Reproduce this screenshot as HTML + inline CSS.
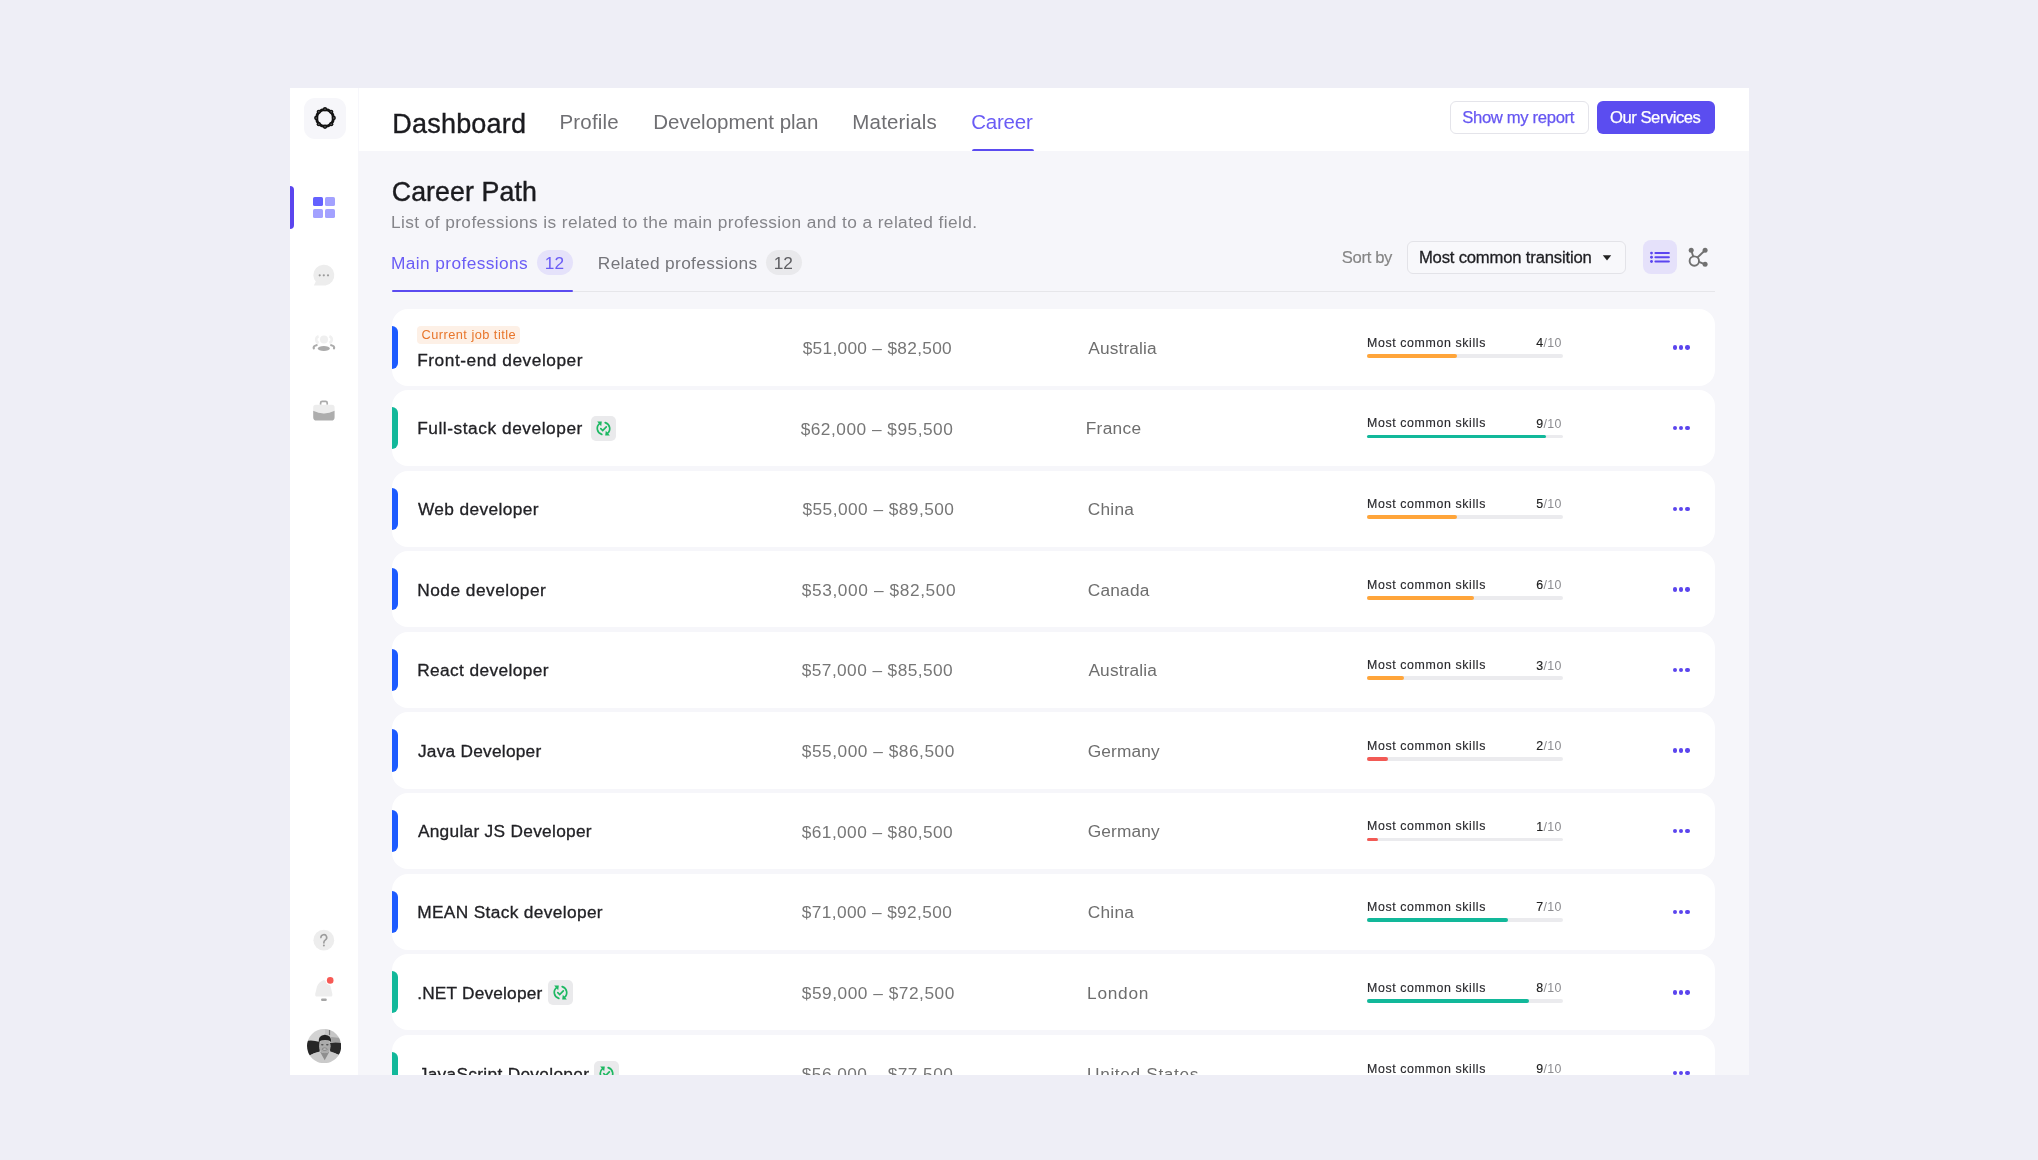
<!DOCTYPE html><html><head><meta charset="utf-8"><title>Career Path</title><style>
*{margin:0;padding:0;box-sizing:content-box}
html,body{width:2038px;height:1160px;overflow:hidden;background:#EEEEF6;font-family:"Liberation Sans",sans-serif;}
.abs{position:absolute}
.layer{position:absolute;left:0;top:0;width:2038px;height:1160px;will-change:transform}
.t{position:absolute;white-space:nowrap}
.frame{position:absolute;left:290px;top:88px;width:1459px;height:987px;background:#F6F6FA}
.sidebar{position:absolute;left:290px;top:88px;width:68px;height:987px;background:#FFFFFF}
.header{position:absolute;left:358px;top:88px;width:1391px;height:63px;background:#FFFFFF}
.content{position:absolute;left:358px;top:151px;width:1391px;height:924px;background:#F6F6FA}
.rowclip{position:absolute;left:0;top:0;width:2038px;height:1075px;overflow:hidden}
.card{position:absolute;left:391.6px;width:1323.5px;height:76.4px;border-radius:16px;background:#FFFFFF}
.avatar{border-radius:50%;background:radial-gradient(circle at 50% 40%, #5a5a5a 0 22%, #d8d8d8 23% 30%, #3a3a3a 31% 45%, #cfcfcf 46% 100%);overflow:hidden}
</style></head><body><div class="layer"><div class="frame"></div>
<div class="sidebar"></div>
<div class="header"></div>
<div class="content"></div>
<div class="abs" style="left:357.6px;top:88px;width:1px;height:63px;background:#F7F7FB;"></div>
<div class="abs" style="left:304px;top:98px;width:42px;height:41px;border-radius:11px;background:#F6F6FA;"></div>
<svg class="abs" style="left:310.8px;top:104.4px" width="28" height="28" viewBox="0 0 28 28"><circle cx="14" cy="14" r="8.45" fill="none" stroke="#121212" stroke-width="2.9"/><circle cx="22.75" cy="14.00" r="2.15" fill="#121212"/><circle cx="20.19" cy="20.19" r="2.15" fill="#121212"/><circle cx="14.00" cy="22.75" r="2.15" fill="#121212"/><circle cx="7.81" cy="20.19" r="2.15" fill="#121212"/><circle cx="5.25" cy="14.00" r="2.15" fill="#121212"/><circle cx="7.81" cy="7.81" r="2.15" fill="#121212"/><circle cx="14.00" cy="5.25" r="2.15" fill="#121212"/><circle cx="20.19" cy="7.81" r="2.15" fill="#121212"/><circle cx="22.75" cy="14.00" r="0.75" fill="#6a6a6a"/><circle cx="20.19" cy="20.19" r="0.75" fill="#6a6a6a"/><circle cx="14.00" cy="22.75" r="0.75" fill="#6a6a6a"/><circle cx="7.81" cy="20.19" r="0.75" fill="#6a6a6a"/><circle cx="5.25" cy="14.00" r="0.75" fill="#6a6a6a"/><circle cx="7.81" cy="7.81" r="0.75" fill="#6a6a6a"/><circle cx="14.00" cy="5.25" r="0.75" fill="#6a6a6a"/><circle cx="20.19" cy="7.81" r="0.75" fill="#6a6a6a"/></svg>
<div class="abs" style="left:290px;top:186.2px;width:4.2px;height:42.7px;border-radius:0 4px 4px 0;background:#5B45EE;"></div>
<div class="abs" style="left:313.2px;top:196.8px;width:9.5px;height:9.3px;border-radius:1.6px;background:#6461FF;"></div>
<div class="abs" style="left:325px;top:196.8px;width:9.5px;height:9.3px;border-radius:1.6px;background:#A3A1FF;"></div>
<div class="abs" style="left:313.2px;top:208.6px;width:9.5px;height:9.3px;border-radius:1.6px;background:#A3A1FF;"></div>
<div class="abs" style="left:325px;top:208.6px;width:9.5px;height:9.3px;border-radius:1.6px;background:#A3A1FF;"></div>
<svg class="abs" style="left:304px;top:255px" width="40" height="40" viewBox="0 0 40 40"><path d="M9.3 20.2 A10.5 10.5 0 1 1 21.6 30.5 L9.8 30.6 L11.8 26.6 A10.5 10.5 0 0 1 9.3 20.2Z" fill="#EDEDED"/><circle cx="15.7" cy="20.3" r="1.1" fill="#9A9A9A"/><circle cx="19.8" cy="20.3" r="1.1" fill="#9A9A9A"/><circle cx="24" cy="20.3" r="1.1" fill="#9A9A9A"/></svg>
<svg class="abs" style="left:304px;top:325px" width="40" height="40" viewBox="0 0 40 40"><circle cx="20" cy="14.6" r="4" fill="#EFEFEF"/><path d="M14.6 11.2 a3.6 3.6 0 0 0 0 6.8" fill="none" stroke="#F0F0F0" stroke-width="2.6"/><path d="M25.4 11.2 a3.6 3.6 0 0 1 0 6.8" fill="none" stroke="#F0F0F0" stroke-width="2.6"/><ellipse cx="19.8" cy="23.5" rx="6" ry="2.4" fill="#ABABAB"/><path d="M12.6 20.2 Q9 21 9.8 23.4" fill="none" stroke="#ABABAB" stroke-width="2.2" stroke-linecap="round"/><path d="M27.2 20.2 Q30.8 21 30 23.4" fill="none" stroke="#ABABAB" stroke-width="2.2" stroke-linecap="round"/></svg>
<svg class="abs" style="left:304px;top:392px" width="40" height="40" viewBox="0 0 40 40"><path d="M16.6 12.8 v-1.8 a1.6 1.6 0 0 1 1.6 -1.6 h3.4 a1.6 1.6 0 0 1 1.6 1.6 v1.8" fill="none" stroke="#ABABAB" stroke-width="1.7"/><path d="M9.2 15.4 a2.6 2.6 0 0 1 2.6 -2.6 h16.2 a2.6 2.6 0 0 1 2.6 2.6 v3.4 q-5.5 2.6 -10.7 2.6 q-5.2 0 -10.7 -2.6z" fill="#EDEDED"/><path d="M9.2 18.8 q5.5 2.6 10.7 2.6 q5.2 0 10.7 -2.6 v6.4 a3.4 3.4 0 0 1 -3.4 3.4 h-14.6 a3.4 3.4 0 0 1 -3.4 -3.4z" fill="#ADADAD"/></svg>
<svg class="abs" style="left:304px;top:920px" width="40" height="40" viewBox="0 0 40 40"><circle cx="19.8" cy="20.2" r="10.4" fill="#EDEDED"/><path d="M16.9 17.6 a2.9 2.9 0 1 1 4.3 2.5 q-1.3 0.8 -1.3 2.2 v0.6" fill="none" stroke="#9C9C9C" stroke-width="1.6" stroke-linecap="round"/><circle cx="19.9" cy="25.6" r="1" fill="#9C9C9C"/></svg>
<svg class="abs" style="left:304px;top:970px" width="40" height="40" viewBox="0 0 40 40"><path d="M19.8 10 C22.5 11 25.6 13.5 26.6 16.5 L28.2 23.2 Q29 26.6 26.6 26.6 H13 Q10.6 26.6 11.4 23.2 L13 16.5 C14 13.5 17.1 11 19.8 10Z" fill="#EDEDED"/><rect x="17" y="28.6" width="5.8" height="2.4" rx="1.2" fill="#A5A5A5"/><circle cx="26.2" cy="10.4" r="4.6" fill="#FFFFFF"/><circle cx="26.2" cy="10.4" r="3.3" fill="#F75A55"/></svg>
<svg class="abs" style="left:306.8px;top:1029px" width="34.2" height="34.2" viewBox="0 0 34 34"><defs><clipPath id="avc"><circle cx="17" cy="17" r="17"/></clipPath><filter id="avb"><feGaussianBlur stdDeviation="0.35"/></filter></defs><g clip-path="url(#avc)"><g filter="url(#avb)"><rect x="-2" y="-2" width="38" height="38" fill="#C6C6C6"/><rect x="-2" y="-2" width="20" height="14" fill="#D3D3D3"/><path d="M21.8 0 L23 0 L23 6 L21.8 6Z" fill="#777"/><path d="M24 8 L33 9 L33 14 L24 13Z" fill="#A0A0A0"/><path d="M-2 12 Q6 10.5 12.4 13 L12.6 22.4 Q6 24 1 27 L-2 27Z" fill="#282828"/><path d="M22.6 14 Q28 12.6 36 14.2 L36 27 Q29 25 23 22.2Z" fill="#2C2C2C"/><path d="M-2 36 L2 26.5 Q8 23 13 22.6 L17.6 29 L22.2 22.6 Q28 23.2 32 26 L36 36Z" fill="#CACACA"/><path d="M13 22.6 L17.6 31 L22.2 22.6 Q17.6 25 13 22.6Z" fill="#8E8E8E"/><ellipse cx="17.8" cy="17.2" rx="5.7" ry="6.8" fill="#ABABAB"/><path d="M11.6 13.8 Q10.8 6.2 17.8 5.8 Q24.6 6.2 24 13.4 Q23 10.6 17.8 10.9 Q12.8 10.8 11.6 13.8Z" fill="#242424"/><ellipse cx="15.2" cy="15.6" rx="1.3" ry="0.7" fill="#505050"/><ellipse cx="20.2" cy="15.6" rx="1.3" ry="0.7" fill="#505050"/><ellipse cx="17.6" cy="20" rx="2.6" ry="1" fill="#D8D8D8" stroke="#5a5a5a" stroke-width="0.6"/></g></g></svg>
<div class="t" style="left:392.34px;top:111.45px;font-size:27.05px;line-height:27.05px;color:#1B1B1F;letter-spacing:0.172px;-webkit-text-stroke:0.35px #1B1B1F;">Dashboard</div>
<div class="t" style="left:559.50px;top:112.24px;font-size:20.51px;line-height:20.51px;color:#6F6F73;letter-spacing:0.162px;">Profile</div>
<div class="t" style="left:653.27px;top:112.24px;font-size:20.51px;line-height:20.51px;color:#6F6F73;letter-spacing:-0.010px;">Development plan</div>
<div class="t" style="left:852.35px;top:112.24px;font-size:20.51px;line-height:20.51px;color:#6F6F73;letter-spacing:0.159px;">Materials</div>
<div class="t" style="left:971.20px;top:112.24px;font-size:20.51px;line-height:20.51px;color:#6A5CF5;letter-spacing:-0.215px;">Career</div>
<div class="abs" style="left:971.7px;top:148.6px;width:62.3px;height:2.6px;border-radius:2px 2px 0 0;background:#5B4BF0;"></div>
<div class="abs" style="left:1450px;top:100.6px;width:139px;height:33.4px;box-sizing:border-box;border:1px solid #E4E4EA;border-radius:6px;background:#fff;"></div>
<div class="t" style="left:1462.28px;top:109.76px;font-size:16.65px;line-height:16.65px;color:#6657F2;letter-spacing:-0.337px;-webkit-text-stroke:0.25px #6657F2;">Show my report</div>
<div class="abs" style="left:1597.2px;top:100.6px;width:117.8px;height:33.6px;border-radius:6px;background:#5B4DF0;"></div>
<div class="t" style="left:1610.05px;top:109.76px;font-size:16.65px;line-height:16.65px;color:#FFFFFF;letter-spacing:-0.480px;-webkit-text-stroke:0.25px #fff;">Our Services</div>
<div class="t" style="left:391.74px;top:179.19px;font-size:26.76px;line-height:26.76px;color:#1B1B1F;letter-spacing:0.085px;-webkit-text-stroke:0.4px #1B1B1F;">Career Path</div>
<div class="t" style="left:391.04px;top:213.71px;font-size:17.30px;line-height:17.30px;color:#85858A;letter-spacing:0.406px;">List of professions is related to the main profession and to a related field.</div>
<div class="t" style="left:391.04px;top:255.21px;font-size:17.30px;line-height:17.30px;color:#6A5CF5;letter-spacing:0.402px;">Main professions</div>
<div class="abs" style="left:537.3px;top:250.1px;width:35.5px;height:25.1px;border-radius:13px;background:#E5E2FA;"></div>
<div class="t" style="left:544.81px;top:254.83px;font-size:17.30px;line-height:17.30px;color:#6A5CF5;">12</div>
<div class="t" style="left:597.81px;top:255.21px;font-size:17.30px;line-height:17.30px;color:#75757A;letter-spacing:0.362px;">Related professions</div>
<div class="abs" style="left:765.8px;top:250.1px;width:35.9px;height:25.1px;border-radius:13px;background:#E9E9EC;"></div>
<div class="t" style="left:773.66px;top:254.83px;font-size:17.30px;line-height:17.30px;color:#5E5E62;">12</div>
<div class="abs" style="left:392px;top:290.8px;width:1323px;height:1.2px;background:#E6E6EA;"></div>
<div class="abs" style="left:391.75px;top:289.5px;width:181.5px;height:2.6px;border-radius:2px;background:#5B4BF0;"></div>
<div class="t" style="left:1341.82px;top:249.76px;font-size:16.65px;line-height:16.65px;color:#858585;letter-spacing:-0.355px;-webkit-text-stroke:0.15px #858585;">Sort by</div>
<div class="abs" style="left:1406.5px;top:240.8px;width:219px;height:32.8px;box-sizing:border-box;border:1px solid #E3E3E8;border-radius:6px;background:#F8F8FB;"></div>
<div class="t" style="left:1418.89px;top:249.76px;font-size:16.65px;line-height:16.65px;color:#1F1F23;letter-spacing:-0.180px;-webkit-text-stroke:0.3px #1F1F23;">Most common transition</div>
<svg class="abs" style="left:1602px;top:254px" width="10" height="8" viewBox="0 0 10 8"><path d="M0.8 1.2 L9.2 1.2 L5 6.4Z" fill="#222"/></svg>
<div class="abs" style="left:1643px;top:240.2px;width:33.8px;height:33.8px;border-radius:8px;background:#E5E1FA;"></div>
<svg class="abs" style="left:1643px;top:240px" width="34" height="34" viewBox="0 0 34 34"><g fill="#5B45F0"><circle cx="8.5" cy="13.1" r="1.45"/><circle cx="8.5" cy="17.2" r="1.45"/><circle cx="8.5" cy="21.5" r="1.45"/></g><g stroke="#5B45F0" stroke-width="2" stroke-linecap="round"><line x1="12.4" y1="13.1" x2="25.9" y2="13.1"/><line x1="12.4" y1="17.2" x2="25.9" y2="17.2"/><line x1="12.4" y1="21.5" x2="25.9" y2="21.5"/></g></svg>
<svg class="abs" style="left:1684px;top:244px" width="26" height="26" viewBox="0 0 26 26"><g stroke="#717171" stroke-width="1.9" fill="none"><circle cx="10.3" cy="17.1" r="4.7"/><line x1="9.2" y1="12.4" x2="7.2" y2="6.3"/><line x1="13.4" y1="13.5" x2="21.1" y2="6.3"/><line x1="15" y1="17.8" x2="21.1" y2="20.3"/></g><g fill="#717171"><circle cx="7.2" cy="6.3" r="2.5"/><circle cx="21.1" cy="6.3" r="2.5"/><circle cx="21.1" cy="20.3" r="2.5"/></g></svg>
<div class="rowclip"><div class="card" style="top:309.30px;"></div><div class="abs" style="left:391.6px;top:326.40px;width:6.7px;height:42.2px;border-radius:0 6px 6px 0;background:#1D5BFF;"></div><div class="abs" style="left:417px;top:325.50px;width:103px;height:18.6px;border-radius:4px;background:#FDF0E6;"></div><div class="t" style="left:421.51px;top:328.51px;font-size:12.80px;line-height:12.80px;color:#E8752A;letter-spacing:0.459px;">Current job title</div><div class="t" style="left:417.20px;top:351.96px;font-size:17.30px;line-height:17.30px;color:#222226;letter-spacing:0.539px;-webkit-text-stroke:0.3px #222226;">Front-end developer</div><div class="t" style="left:802.67px;top:340.21px;font-size:17.30px;line-height:17.30px;color:#767676;letter-spacing:0.306px;">$51,000 – $82,500</div><div class="t" style="left:1088.28px;top:340.33px;font-size:17.30px;line-height:17.30px;color:#6E6E6E;letter-spacing:0.138px;">Australia</div><div class="t" style="left:1366.97px;top:336.63px;font-size:12.36px;line-height:12.36px;color:#2A2A2E;letter-spacing:0.621px;-webkit-text-stroke:0.15px #2A2A2E;">Most common skills</div><div class="t" style="left:1520px;width:41.6px;text-align:right;top:337.23px;font-size:12.36px;line-height:12.36px;color:#8C8C90;letter-spacing:0.3px;"><span style="color:#222;-webkit-text-stroke:0.15px #222;">4</span>/10</div><div class="abs" style="left:1367.2px;top:354.00px;width:195.8px;height:3.9px;border-radius:2px;background:#EBEBEE;"></div><div class="abs" style="left:1367.2px;top:354.00px;width:89.80px;height:3.9px;border-radius:2px;background:#FFA53A;"></div><div class="abs" style="left:1672.50px;top:345.45px;width:4.3px;height:4.3px;border-radius:50%;background:#5B45EE;"></div><div class="abs" style="left:1678.85px;top:345.45px;width:4.3px;height:4.3px;border-radius:50%;background:#5B45EE;"></div><div class="abs" style="left:1685.35px;top:345.45px;width:4.3px;height:4.3px;border-radius:50%;background:#5B45EE;"></div><div class="card" style="top:389.90px;"></div><div class="abs" style="left:391.6px;top:407.00px;width:6.7px;height:42.2px;border-radius:0 6px 6px 0;background:#12B89A;"></div><div class="t" style="left:417.20px;top:420.21px;font-size:17.30px;line-height:17.30px;color:#222226;letter-spacing:0.551px;-webkit-text-stroke:0.3px #222226;">Full-stack developer</div><div class="abs" style="left:591.20px;top:415.70px;width:25px;height:25.2px;border-radius:5px;background:#EAEAEC;"></div><svg class="abs" style="left:591.20px;top:415.70px" width="25" height="25" viewBox="0 0 25 25"><g fill="none" stroke="#1DB862" stroke-width="1.7" stroke-linecap="round"><path d="M10.8 18.4 A6.2 6.2 0 0 1 8.6 7.6"/><path d="M14.2 6.6 A6.2 6.2 0 0 1 16.4 17.4"/><path d="M9.8 12.6 l1.9 1.9 l3.6 -3.6"/></g><path d="M6.2 5.6 L10.8 5.6 L10.2 10.2Z" fill="#1DB862"/><path d="M18.8 19.4 L14.2 19.4 L14.8 14.8Z" fill="#1DB862"/></svg><div class="t" style="left:800.67px;top:420.71px;font-size:17.30px;line-height:17.30px;color:#767676;letter-spacing:0.498px;">$62,000 – $95,500</div><div class="t" style="left:1085.66px;top:420.33px;font-size:17.30px;line-height:17.30px;color:#6E6E6E;letter-spacing:0.346px;">France</div><div class="t" style="left:1366.97px;top:417.13px;font-size:12.36px;line-height:12.36px;color:#2A2A2E;letter-spacing:0.621px;-webkit-text-stroke:0.15px #2A2A2E;">Most common skills</div><div class="t" style="left:1520px;width:41.6px;text-align:right;top:417.83px;font-size:12.36px;line-height:12.36px;color:#8C8C90;letter-spacing:0.3px;"><span style="color:#222;-webkit-text-stroke:0.15px #222;">9</span>/10</div><div class="abs" style="left:1367.2px;top:434.60px;width:195.8px;height:3.9px;border-radius:2px;background:#EBEBEE;"></div><div class="abs" style="left:1367.2px;top:434.60px;width:179.00px;height:3.9px;border-radius:2px;background:#12B89A;"></div><div class="abs" style="left:1672.50px;top:426.05px;width:4.3px;height:4.3px;border-radius:50%;background:#5B45EE;"></div><div class="abs" style="left:1678.85px;top:426.05px;width:4.3px;height:4.3px;border-radius:50%;background:#5B45EE;"></div><div class="abs" style="left:1685.35px;top:426.05px;width:4.3px;height:4.3px;border-radius:50%;background:#5B45EE;"></div><div class="card" style="top:470.50px;"></div><div class="abs" style="left:391.6px;top:487.60px;width:6.7px;height:42.2px;border-radius:0 6px 6px 0;background:#1D5BFF;"></div><div class="t" style="left:417.90px;top:501.21px;font-size:17.30px;line-height:17.30px;color:#222226;letter-spacing:0.399px;-webkit-text-stroke:0.3px #222226;">Web developer</div><div class="t" style="left:802.44px;top:501.21px;font-size:17.30px;line-height:17.30px;color:#767676;letter-spacing:0.460px;">$55,000 – $89,500</div><div class="t" style="left:1087.74px;top:501.33px;font-size:17.30px;line-height:17.30px;color:#6E6E6E;letter-spacing:0.259px;">China</div><div class="t" style="left:1366.97px;top:498.13px;font-size:12.36px;line-height:12.36px;color:#2A2A2E;letter-spacing:0.621px;-webkit-text-stroke:0.15px #2A2A2E;">Most common skills</div><div class="t" style="left:1520px;width:41.6px;text-align:right;top:498.43px;font-size:12.36px;line-height:12.36px;color:#8C8C90;letter-spacing:0.3px;"><span style="color:#222;-webkit-text-stroke:0.15px #222;">5</span>/10</div><div class="abs" style="left:1367.2px;top:515.20px;width:195.8px;height:3.9px;border-radius:2px;background:#EBEBEE;"></div><div class="abs" style="left:1367.2px;top:515.20px;width:89.80px;height:3.9px;border-radius:2px;background:#FFA53A;"></div><div class="abs" style="left:1672.50px;top:506.65px;width:4.3px;height:4.3px;border-radius:50%;background:#5B45EE;"></div><div class="abs" style="left:1678.85px;top:506.65px;width:4.3px;height:4.3px;border-radius:50%;background:#5B45EE;"></div><div class="abs" style="left:1685.35px;top:506.65px;width:4.3px;height:4.3px;border-radius:50%;background:#5B45EE;"></div><div class="card" style="top:551.10px;"></div><div class="abs" style="left:391.6px;top:568.20px;width:6.7px;height:42.2px;border-radius:0 6px 6px 0;background:#1D5BFF;"></div><div class="t" style="left:417.20px;top:581.71px;font-size:17.30px;line-height:17.30px;color:#222226;letter-spacing:0.511px;-webkit-text-stroke:0.3px #222226;">Node developer</div><div class="t" style="left:801.82px;top:581.71px;font-size:17.30px;line-height:17.30px;color:#767676;letter-spacing:0.600px;">$53,000 – $82,500</div><div class="t" style="left:1087.74px;top:581.83px;font-size:17.30px;line-height:17.30px;color:#6E6E6E;letter-spacing:0.224px;">Canada</div><div class="t" style="left:1366.97px;top:578.63px;font-size:12.36px;line-height:12.36px;color:#2A2A2E;letter-spacing:0.621px;-webkit-text-stroke:0.15px #2A2A2E;">Most common skills</div><div class="t" style="left:1520px;width:41.6px;text-align:right;top:579.03px;font-size:12.36px;line-height:12.36px;color:#8C8C90;letter-spacing:0.3px;"><span style="color:#222;-webkit-text-stroke:0.15px #222;">6</span>/10</div><div class="abs" style="left:1367.2px;top:595.80px;width:195.8px;height:3.9px;border-radius:2px;background:#EBEBEE;"></div><div class="abs" style="left:1367.2px;top:595.80px;width:106.60px;height:3.9px;border-radius:2px;background:#FFA53A;"></div><div class="abs" style="left:1672.50px;top:587.25px;width:4.3px;height:4.3px;border-radius:50%;background:#5B45EE;"></div><div class="abs" style="left:1678.85px;top:587.25px;width:4.3px;height:4.3px;border-radius:50%;background:#5B45EE;"></div><div class="abs" style="left:1685.35px;top:587.25px;width:4.3px;height:4.3px;border-radius:50%;background:#5B45EE;"></div><div class="card" style="top:631.70px;"></div><div class="abs" style="left:391.6px;top:648.80px;width:6.7px;height:42.2px;border-radius:0 6px 6px 0;background:#1D5BFF;"></div><div class="t" style="left:417.20px;top:662.21px;font-size:17.30px;line-height:17.30px;color:#222226;letter-spacing:0.384px;-webkit-text-stroke:0.3px #222226;">React developer</div><div class="t" style="left:801.82px;top:662.21px;font-size:17.30px;line-height:17.30px;color:#767676;letter-spacing:0.412px;">$57,000 – $85,500</div><div class="t" style="left:1088.44px;top:662.33px;font-size:17.30px;line-height:17.30px;color:#6E6E6E;letter-spacing:0.157px;">Australia</div><div class="t" style="left:1366.97px;top:659.13px;font-size:12.36px;line-height:12.36px;color:#2A2A2E;letter-spacing:0.621px;-webkit-text-stroke:0.15px #2A2A2E;">Most common skills</div><div class="t" style="left:1520px;width:41.6px;text-align:right;top:659.63px;font-size:12.36px;line-height:12.36px;color:#8C8C90;letter-spacing:0.3px;"><span style="color:#222;-webkit-text-stroke:0.15px #222;">3</span>/10</div><div class="abs" style="left:1367.2px;top:676.40px;width:195.8px;height:3.9px;border-radius:2px;background:#EBEBEE;"></div><div class="abs" style="left:1367.2px;top:676.40px;width:37.00px;height:3.9px;border-radius:2px;background:#FFA53A;"></div><div class="abs" style="left:1672.50px;top:667.85px;width:4.3px;height:4.3px;border-radius:50%;background:#5B45EE;"></div><div class="abs" style="left:1678.85px;top:667.85px;width:4.3px;height:4.3px;border-radius:50%;background:#5B45EE;"></div><div class="abs" style="left:1685.35px;top:667.85px;width:4.3px;height:4.3px;border-radius:50%;background:#5B45EE;"></div><div class="card" style="top:712.30px;"></div><div class="abs" style="left:391.6px;top:729.40px;width:6.7px;height:42.2px;border-radius:0 6px 6px 0;background:#1D5BFF;"></div><div class="t" style="left:417.90px;top:742.71px;font-size:17.30px;line-height:17.30px;color:#222226;letter-spacing:0.252px;-webkit-text-stroke:0.3px #222226;">Java Developer</div><div class="t" style="left:801.82px;top:743.21px;font-size:17.30px;line-height:17.30px;color:#767676;letter-spacing:0.518px;">$55,000 – $86,500</div><div class="t" style="left:1087.74px;top:743.33px;font-size:17.30px;line-height:17.30px;color:#6E6E6E;letter-spacing:0.142px;">Germany</div><div class="t" style="left:1366.97px;top:739.63px;font-size:12.36px;line-height:12.36px;color:#2A2A2E;letter-spacing:0.621px;-webkit-text-stroke:0.15px #2A2A2E;">Most common skills</div><div class="t" style="left:1520px;width:41.6px;text-align:right;top:740.23px;font-size:12.36px;line-height:12.36px;color:#8C8C90;letter-spacing:0.3px;"><span style="color:#222;-webkit-text-stroke:0.15px #222;">2</span>/10</div><div class="abs" style="left:1367.2px;top:757.00px;width:195.8px;height:3.9px;border-radius:2px;background:#EBEBEE;"></div><div class="abs" style="left:1367.2px;top:757.00px;width:21.00px;height:3.9px;border-radius:2px;background:#F25A55;"></div><div class="abs" style="left:1672.50px;top:748.45px;width:4.3px;height:4.3px;border-radius:50%;background:#5B45EE;"></div><div class="abs" style="left:1678.85px;top:748.45px;width:4.3px;height:4.3px;border-radius:50%;background:#5B45EE;"></div><div class="abs" style="left:1685.35px;top:748.45px;width:4.3px;height:4.3px;border-radius:50%;background:#5B45EE;"></div><div class="card" style="top:792.90px;"></div><div class="abs" style="left:391.6px;top:810.00px;width:6.7px;height:42.2px;border-radius:0 6px 6px 0;background:#1D5BFF;"></div><div class="t" style="left:417.90px;top:823.21px;font-size:17.30px;line-height:17.30px;color:#222226;letter-spacing:0.296px;-webkit-text-stroke:0.3px #222226;">Angular JS Developer</div><div class="t" style="left:801.82px;top:823.71px;font-size:17.30px;line-height:17.30px;color:#767676;letter-spacing:0.412px;">$61,000 – $80,500</div><div class="t" style="left:1087.74px;top:823.33px;font-size:17.30px;line-height:17.30px;color:#6E6E6E;letter-spacing:0.142px;">Germany</div><div class="t" style="left:1366.97px;top:820.13px;font-size:12.36px;line-height:12.36px;color:#2A2A2E;letter-spacing:0.621px;-webkit-text-stroke:0.15px #2A2A2E;">Most common skills</div><div class="t" style="left:1520px;width:41.6px;text-align:right;top:820.83px;font-size:12.36px;line-height:12.36px;color:#8C8C90;letter-spacing:0.3px;"><span style="color:#222;-webkit-text-stroke:0.15px #222;">1</span>/10</div><div class="abs" style="left:1367.2px;top:837.60px;width:195.8px;height:3.9px;border-radius:2px;background:#EBEBEE;"></div><div class="abs" style="left:1367.2px;top:837.60px;width:10.80px;height:3.9px;border-radius:2px;background:#F25A55;"></div><div class="abs" style="left:1672.50px;top:829.05px;width:4.3px;height:4.3px;border-radius:50%;background:#5B45EE;"></div><div class="abs" style="left:1678.85px;top:829.05px;width:4.3px;height:4.3px;border-radius:50%;background:#5B45EE;"></div><div class="abs" style="left:1685.35px;top:829.05px;width:4.3px;height:4.3px;border-radius:50%;background:#5B45EE;"></div><div class="card" style="top:873.50px;"></div><div class="abs" style="left:391.6px;top:890.60px;width:6.7px;height:42.2px;border-radius:0 6px 6px 0;background:#1D5BFF;"></div><div class="t" style="left:417.20px;top:904.21px;font-size:17.30px;line-height:17.30px;color:#222226;letter-spacing:0.357px;-webkit-text-stroke:0.3px #222226;">MEAN Stack developer</div><div class="t" style="left:801.82px;top:904.21px;font-size:17.30px;line-height:17.30px;color:#767676;letter-spacing:0.364px;">$71,000 – $92,500</div><div class="t" style="left:1087.74px;top:904.33px;font-size:17.30px;line-height:17.30px;color:#6E6E6E;letter-spacing:0.259px;">China</div><div class="t" style="left:1366.97px;top:901.13px;font-size:12.36px;line-height:12.36px;color:#2A2A2E;letter-spacing:0.621px;-webkit-text-stroke:0.15px #2A2A2E;">Most common skills</div><div class="t" style="left:1520px;width:41.6px;text-align:right;top:901.43px;font-size:12.36px;line-height:12.36px;color:#8C8C90;letter-spacing:0.3px;"><span style="color:#222;-webkit-text-stroke:0.15px #222;">7</span>/10</div><div class="abs" style="left:1367.2px;top:918.20px;width:195.8px;height:3.9px;border-radius:2px;background:#EBEBEE;"></div><div class="abs" style="left:1367.2px;top:918.20px;width:141.00px;height:3.9px;border-radius:2px;background:#12B89A;"></div><div class="abs" style="left:1672.50px;top:909.65px;width:4.3px;height:4.3px;border-radius:50%;background:#5B45EE;"></div><div class="abs" style="left:1678.85px;top:909.65px;width:4.3px;height:4.3px;border-radius:50%;background:#5B45EE;"></div><div class="abs" style="left:1685.35px;top:909.65px;width:4.3px;height:4.3px;border-radius:50%;background:#5B45EE;"></div><div class="card" style="top:954.10px;"></div><div class="abs" style="left:391.6px;top:971.20px;width:6.7px;height:42.2px;border-radius:0 6px 6px 0;background:#12B89A;"></div><div class="t" style="left:417.20px;top:984.71px;font-size:17.30px;line-height:17.30px;color:#222226;letter-spacing:0.190px;-webkit-text-stroke:0.3px #222226;">.NET Developer</div><div class="abs" style="left:547.60px;top:979.90px;width:25px;height:25.2px;border-radius:5px;background:#EAEAEC;"></div><svg class="abs" style="left:547.60px;top:979.90px" width="25" height="25" viewBox="0 0 25 25"><g fill="none" stroke="#1DB862" stroke-width="1.7" stroke-linecap="round"><path d="M10.8 18.4 A6.2 6.2 0 0 1 8.6 7.6"/><path d="M14.2 6.6 A6.2 6.2 0 0 1 16.4 17.4"/><path d="M9.8 12.6 l1.9 1.9 l3.6 -3.6"/></g><path d="M6.2 5.6 L10.8 5.6 L10.2 10.2Z" fill="#1DB862"/><path d="M18.8 19.4 L14.2 19.4 L14.8 14.8Z" fill="#1DB862"/></svg><div class="t" style="left:801.82px;top:984.71px;font-size:17.30px;line-height:17.30px;color:#767676;letter-spacing:0.518px;">$59,000 – $72,500</div><div class="t" style="left:1087.04px;top:984.83px;font-size:17.30px;line-height:17.30px;color:#6E6E6E;letter-spacing:0.741px;">London</div><div class="t" style="left:1366.97px;top:981.63px;font-size:12.36px;line-height:12.36px;color:#2A2A2E;letter-spacing:0.621px;-webkit-text-stroke:0.15px #2A2A2E;">Most common skills</div><div class="t" style="left:1520px;width:41.6px;text-align:right;top:982.03px;font-size:12.36px;line-height:12.36px;color:#8C8C90;letter-spacing:0.3px;"><span style="color:#222;-webkit-text-stroke:0.15px #222;">8</span>/10</div><div class="abs" style="left:1367.2px;top:998.80px;width:195.8px;height:3.9px;border-radius:2px;background:#EBEBEE;"></div><div class="abs" style="left:1367.2px;top:998.80px;width:162.30px;height:3.9px;border-radius:2px;background:#12B89A;"></div><div class="abs" style="left:1672.50px;top:990.25px;width:4.3px;height:4.3px;border-radius:50%;background:#5B45EE;"></div><div class="abs" style="left:1678.85px;top:990.25px;width:4.3px;height:4.3px;border-radius:50%;background:#5B45EE;"></div><div class="abs" style="left:1685.35px;top:990.25px;width:4.3px;height:4.3px;border-radius:50%;background:#5B45EE;"></div><div class="card" style="top:1034.70px;"></div><div class="abs" style="left:391.6px;top:1051.80px;width:6.7px;height:42.2px;border-radius:0 6px 6px 0;background:#12B89A;"></div><div class="t" style="left:418.70px;top:1065.56px;font-size:17.30px;line-height:17.30px;color:#222226;letter-spacing:0.316px;-webkit-text-stroke:0.3px #222226;">JavaScript Developer</div><div class="abs" style="left:594.30px;top:1060.50px;width:25px;height:25.2px;border-radius:5px;background:#EAEAEC;"></div><svg class="abs" style="left:594.30px;top:1060.50px" width="25" height="25" viewBox="0 0 25 25"><g fill="none" stroke="#1DB862" stroke-width="1.7" stroke-linecap="round"><path d="M10.8 18.4 A6.2 6.2 0 0 1 8.6 7.6"/><path d="M14.2 6.6 A6.2 6.2 0 0 1 16.4 17.4"/><path d="M9.8 12.6 l1.9 1.9 l3.6 -3.6"/></g><path d="M6.2 5.6 L10.8 5.6 L10.2 10.2Z" fill="#1DB862"/><path d="M18.8 19.4 L14.2 19.4 L14.8 14.8Z" fill="#1DB862"/></svg><div class="t" style="left:801.82px;top:1065.76px;font-size:17.30px;line-height:17.30px;color:#767676;letter-spacing:0.427px;">$56,000 – $77,500</div><div class="t" style="left:1087.04px;top:1065.81px;font-size:17.30px;line-height:17.30px;color:#6E6E6E;letter-spacing:0.633px;">United States</div><div class="t" style="left:1366.97px;top:1062.63px;font-size:12.36px;line-height:12.36px;color:#2A2A2E;letter-spacing:0.621px;-webkit-text-stroke:0.15px #2A2A2E;">Most common skills</div><div class="t" style="left:1520px;width:41.6px;text-align:right;top:1062.63px;font-size:12.36px;line-height:12.36px;color:#8C8C90;letter-spacing:0.3px;"><span style="color:#222;-webkit-text-stroke:0.15px #222;">9</span>/10</div><div class="abs" style="left:1367.2px;top:1079.40px;width:195.8px;height:3.9px;border-radius:2px;background:#EBEBEE;"></div><div class="abs" style="left:1367.2px;top:1079.40px;width:179.00px;height:3.9px;border-radius:2px;background:#12B89A;"></div><div class="abs" style="left:1672.50px;top:1070.85px;width:4.3px;height:4.3px;border-radius:50%;background:#5B45EE;"></div><div class="abs" style="left:1678.85px;top:1070.85px;width:4.3px;height:4.3px;border-radius:50%;background:#5B45EE;"></div><div class="abs" style="left:1685.35px;top:1070.85px;width:4.3px;height:4.3px;border-radius:50%;background:#5B45EE;"></div></div></div></body></html>
